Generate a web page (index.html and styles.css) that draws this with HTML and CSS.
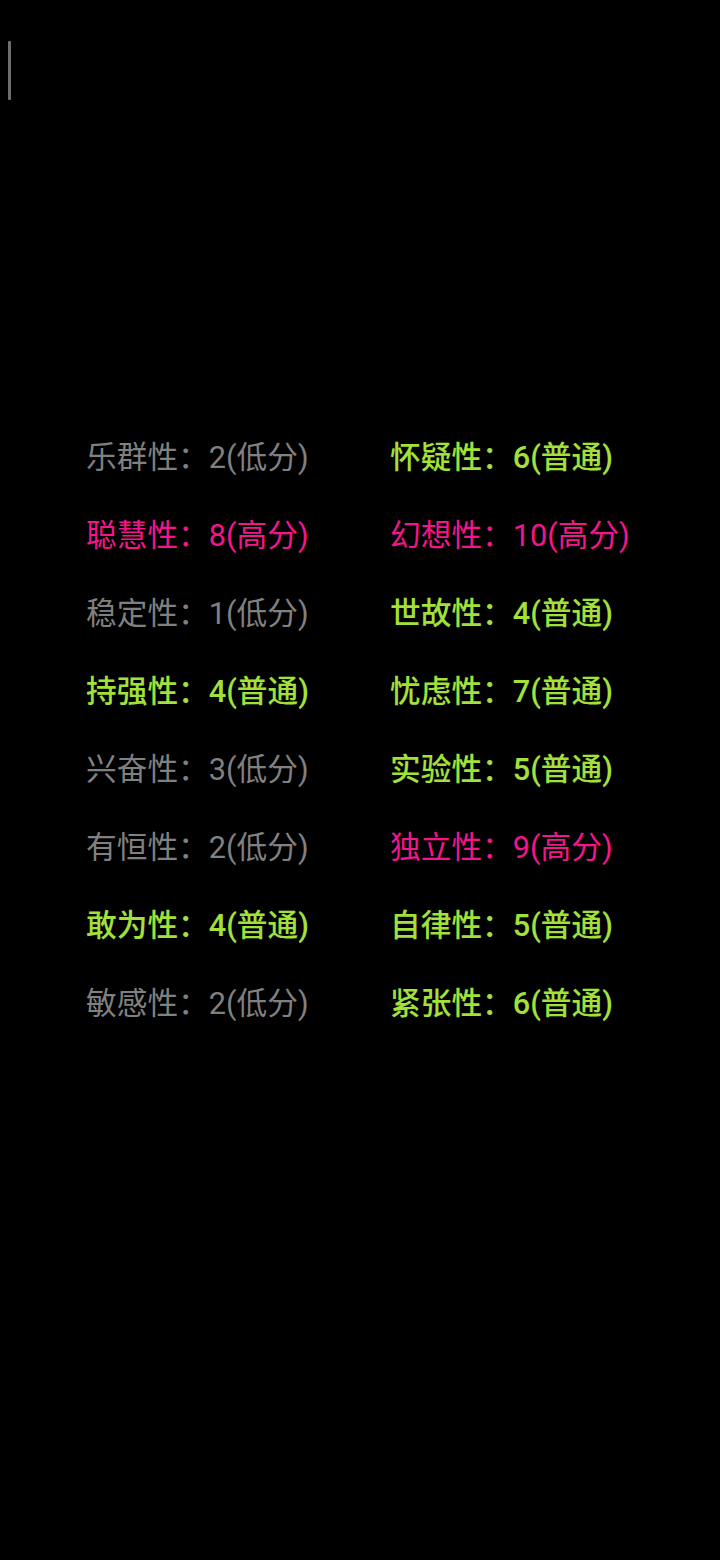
FILE: index.html
```html
<!DOCTYPE html>
<html lang="zh-CN">
<head>
<meta charset="utf-8">
<link rel="stylesheet" href="styles.css">
</head>
<body>
<div class="screen">
  <div class="cursor"></div>
  <div class="traits">
    <div class="t low">乐群性：2(低分)</div>
    <div class="t mid">怀疑性：6(普通)</div>
    <div class="t high">聪慧性：8(高分)</div>
    <div class="t high">幻想性：10(高分)</div>
    <div class="t low">稳定性：1(低分)</div>
    <div class="t mid">世故性：4(普通)</div>
    <div class="t mid">持强性：4(普通)</div>
    <div class="t mid">忧虑性：7(普通)</div>
    <div class="t low">兴奋性：3(低分)</div>
    <div class="t mid">实验性：5(普通)</div>
    <div class="t low">有恒性：2(低分)</div>
    <div class="t high">独立性：9(高分)</div>
    <div class="t mid">敢为性：4(普通)</div>
    <div class="t mid">自律性：5(普通)</div>
    <div class="t low">敏感性：2(低分)</div>
    <div class="t mid">紧张性：6(普通)</div>
  </div>
</div>
</body>
</html>
```
FILE: styles.css
```css
html, body {
  margin: 0;
  padding: 0;
  background: #000;
}
.screen {
  width: 720px;
  height: 1560px;
  background: #000;
  padding-top: 41px;
  box-sizing: border-box;
}
.cursor {
  width: 3px;
  height: 59px;
  margin-left: 8px;
  background: #6e6e6e;
  border-radius: 1px;
}
.traits {
  margin-top: 319px;
  padding-left: 86px;
  display: grid;
  grid-template-columns: 304px auto;
}
.t {
  font-family: Roboto, "Noto Sans CJK SC", sans-serif;
  font-size: 30.7px;
  line-height: 78px;
  white-space: nowrap;
}
.low { color: #808080; }
.mid { color: #a2e03a; font-weight: 500; }
.high { color: #f2168c; }
```
